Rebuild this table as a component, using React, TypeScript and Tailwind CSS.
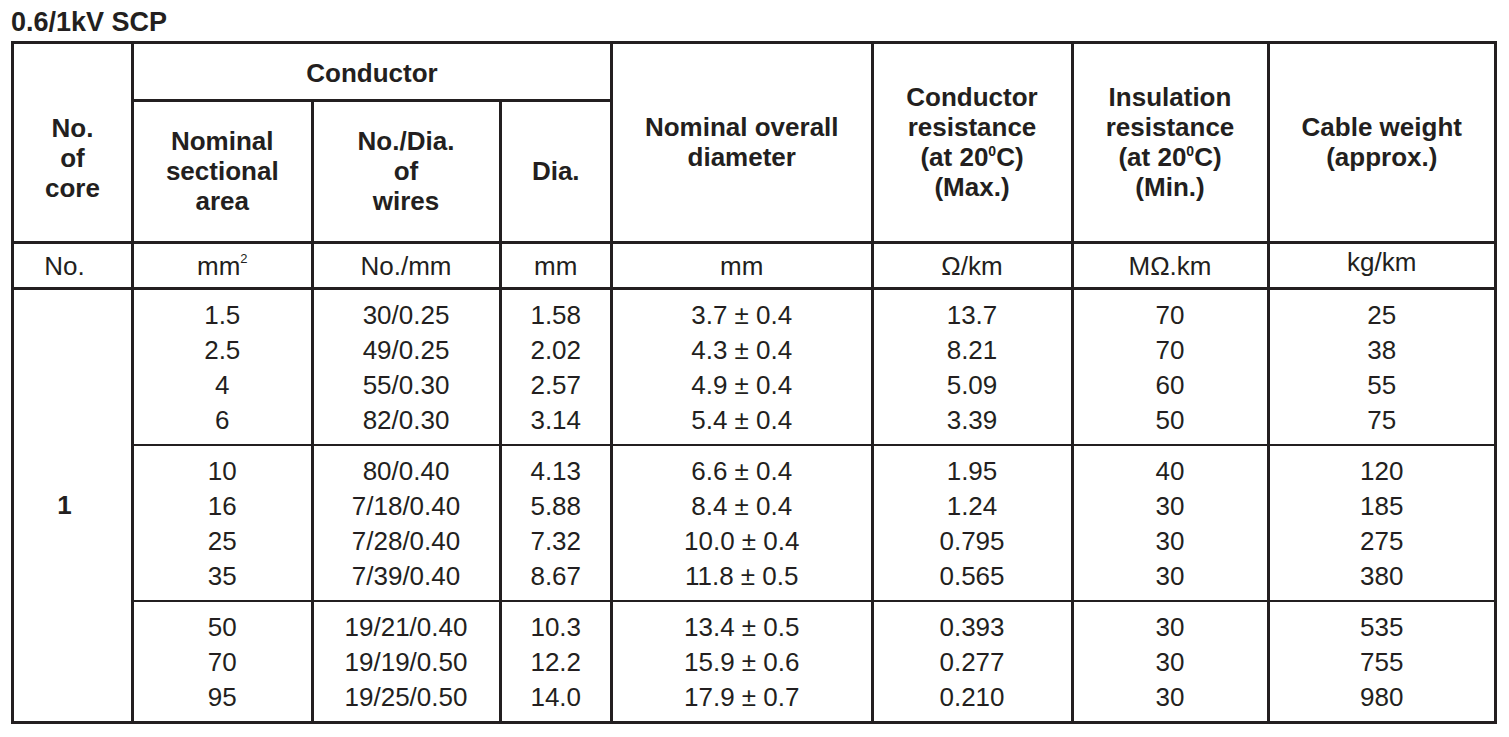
import React from "react";

type Row = [string, string, string, string, string, string, string];

const groups: Row[][] = [
  [
    ["1.5", "30/0.25", "1.58", "3.7 ± 0.4", "13.7", "70", "25"],
    ["2.5", "49/0.25", "2.02", "4.3 ± 0.4", "8.21", "70", "38"],
    ["4", "55/0.30", "2.57", "4.9 ± 0.4", "5.09", "60", "55"],
    ["6", "82/0.30", "3.14", "5.4 ± 0.4", "3.39", "50", "75"],
  ],
  [
    ["10", "80/0.40", "4.13", "6.6 ± 0.4", "1.95", "40", "120"],
    ["16", "7/18/0.40", "5.88", "8.4 ± 0.4", "1.24", "30", "185"],
    ["25", "7/28/0.40", "7.32", "10.0 ± 0.4", "0.795", "30", "275"],
    ["35", "7/39/0.40", "8.67", "11.8 ± 0.5", "0.565", "30", "380"],
  ],
  [
    ["50", "19/21/0.40", "10.3", "13.4 ± 0.5", "0.393", "30", "535"],
    ["70", "19/19/0.50", "12.2", "15.9 ± 0.6", "0.277", "30", "755"],
    ["95", "19/25/0.50", "14.0", "17.9 ± 0.7", "0.210", "30", "980"],
  ],
];

const groupCellClass = [
  "border-x-[3px] border-t-[3px] border-b-2 h-[156px]",
  "border-x-[3px] border-t-2 border-b-2 h-[156.5px]",
  "border-x-[3px] border-t-2 border-b-[3px] h-[121px]",
];

const hdr = "border-[3px] border-[#231f20] text-center align-middle font-bold leading-[30px] p-0";
const unit = "border-[3px] border-[#231f20] text-center align-middle leading-[30px] p-0 h-[46.5px]";

function Deg() {
  return (
    <span className="inline-block text-[14px] leading-[14px] font-bold align-top relative top-[2px]">
      0
    </span>
  );
}

export default function App() {
  return (
    <div
      className="bg-white text-[#231f20] text-[26px] pl-[11px] pt-[7px]"
      style={{ fontFamily: '"Liberation Sans", Arial, Helvetica, sans-serif' }}
    >
      <div className="font-bold text-[27px] leading-[30px] mb-[4px]">0.6/1kV SCP</div>
      <table className="border-collapse table-fixed">
        <colgroup>
          <col className="w-[120px]" />
          <col className="w-[179.5px]" />
          <col className="w-[188px]" />
          <col className="w-[111.5px]" />
          <col className="w-[260.5px]" />
          <col className="w-[200px]" />
          <col className="w-[196px]" />
          <col className="w-[227.5px]" />
        </colgroup>
        <thead>
          <tr>
            <th rowSpan={2} className={hdr + " pt-[32px]"}>
              No.
              <br />
              of
              <br />
              core
            </th>
            <th colSpan={3} className={hdr + " h-[58px] pt-[2px]"}>
              Conductor
            </th>
            <th rowSpan={2} className={hdr}>
              Nominal overall
              <br />
              diameter
            </th>
            <th rowSpan={2} className={hdr}>
              Conductor
              <br />
              resistance
              <br />
              (at 20<Deg />C)
              <br />
              (Max.)
            </th>
            <th rowSpan={2} className={hdr}>
              Insulation
              <br />
              resistance
              <br />
              (at 20<Deg />C)
              <br />
              (Min.)
            </th>
            <th rowSpan={2} className={hdr}>
              Cable weight
              <br />
              (approx.)
            </th>
          </tr>
          <tr>
            <th className={hdr + " h-[141.5px]"}>
              Nominal
              <br />
              sectional
              <br />
              area
            </th>
            <th className={hdr}>
              No./Dia.
              <br />
              of
              <br />
              wires
            </th>
            <th className={hdr}>Dia.</th>
          </tr>
        </thead>
        <tbody>
          <tr>
            <td className={unit + " pr-4 pt-[2px]"}>No.</td>
            <td className={unit + " pt-[2px]"}>
              mm
              <span className="inline-block text-[13px] leading-[13px] align-top relative top-[1px]">2</span>
            </td>
            <td className={unit + " pt-[2px]"}>No./mm</td>
            <td className={unit + " pt-[2px]"}>mm</td>
            <td className={unit + " pt-[2px]"}>mm</td>
            <td className={unit + " pt-[2px]"}>Ω/km</td>
            <td className={unit + " pt-[2px]"}>MΩ.km</td>
            <td className={unit + " pb-[6px]"}>kg/km</td>
          </tr>
          {groups.map((g, gi) => (
            <tr key={gi}>
              {gi === 0 && (
                <td
                  rowSpan={3}
                  className="border-[3px] border-[#231f20] text-center align-middle font-bold pr-4 p-0"
                >
                  1
                </td>
              )}
              {[0, 1, 2, 3, 4, 5, 6].map((ci) => (
                <td
                  key={ci}
                  className={
                    groupCellClass[gi] +
                    " border-[#231f20] text-center align-middle p-0 pt-[2px] leading-[35px]"
                  }
                >
                  {g.map((r, ri) => (
                    <div key={ri}>{r[ci]}</div>
                  ))}
                </td>
              ))}
            </tr>
          ))}
        </tbody>
      </table>
    </div>
  );
}
